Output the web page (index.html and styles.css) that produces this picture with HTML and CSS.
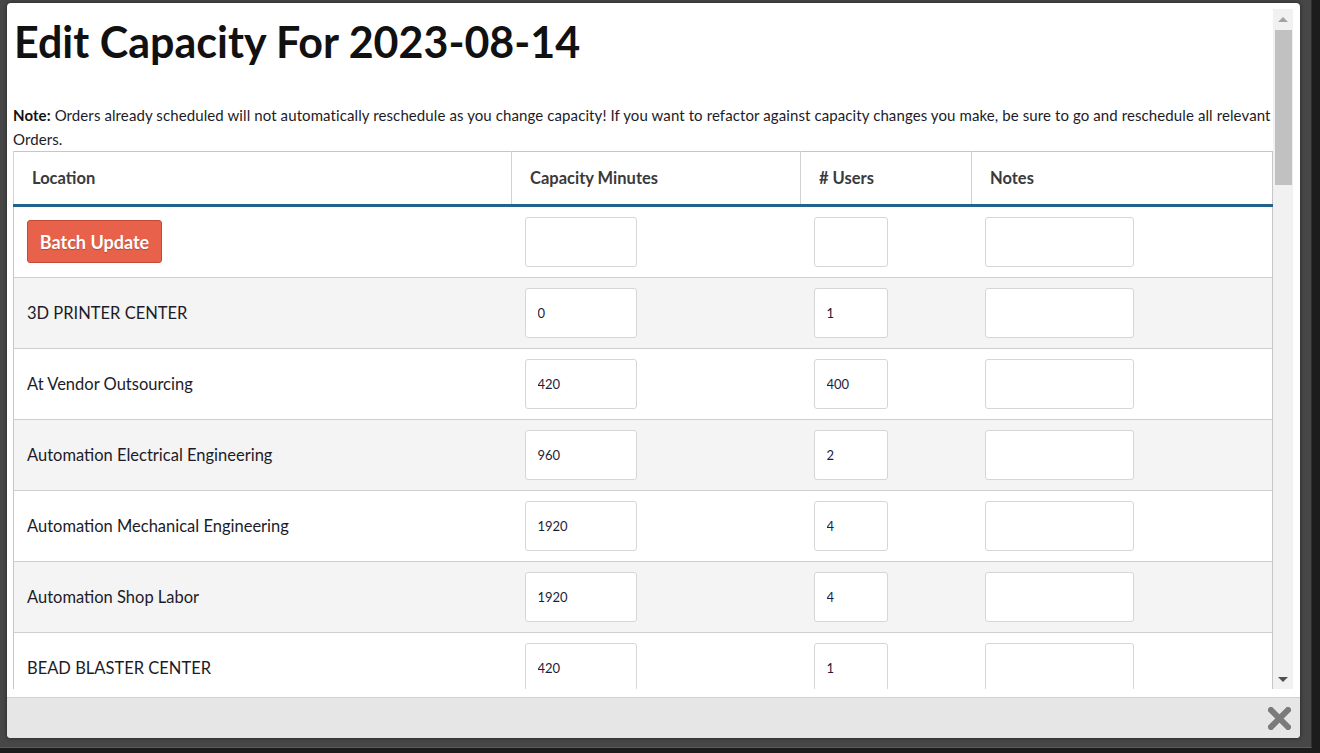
FILE: index.html
```html
<!DOCTYPE html>
<html lang="en">
<head>
  <meta charset="UTF-8">
  <title>Edit Capacity</title>
  <link rel="stylesheet" href="styles.css">
</head>
<body>

  <div class="backdrop">
    <div class="modal">
      <div class="modal-body">
        <div class="scroll-content">
          <h1>Edit Capacity For 2023-08-14</h1>
          <p class="note"><b>Note:</b> Orders already scheduled will not automatically reschedule as you change capacity! If you want to refactor against capacity changes you make, be sure to go and reschedule all relevant Orders.</p>

          <table class="capacity">
            <colgroup>
              <col style="width: 498px">
              <col style="width: 289px">
              <col style="width: 171px">
              <col>
            </colgroup>
            <thead>
              <tr>
                <th>Location</th>
                <th>Capacity Minutes</th>
                <th># Users</th>
                <th>Notes</th>
              </tr>
            </thead>
            <tbody id="capacity-body">
              <tr>
                <td><button class="batch-btn">Batch Update</button></td>
                <td><input class="in-minutes" type="text"></td>
                <td><input class="in-users" type="text"></td>
                <td><input class="in-notes" type="text"></td>
              </tr>
              <!-- location rows get added here -->
            </tbody>
          </table>
        </div>

        <div class="scrollbar">
          <div class="sb-arrow"><span class="tri-up"></span></div>
          <div class="sb-thumb"></div>
          <div class="sb-track"></div>
          <div class="sb-arrow"><span class="tri-down"></span></div>
        </div>
      </div>

      <div class="modal-footer">
        <svg class="close-x" width="23" height="23" viewBox="0 0 23 23">
          <path d="M3 3 L20 20 M20 3 L3 20" stroke="#7b7b7b" stroke-width="6" stroke-linecap="square" fill="none"/>
        </svg>
      </div>
    </div>
  </div>

  <script>
    // capacity per location for the day
    const locations = [
      { name: "3D PRINTER CENTER", minutes: 0, users: 1 },
      { name: "At Vendor Outsourcing", minutes: 420, users: 400 },
      { name: "Automation Electrical Engineering", minutes: 960, users: 2 },
      { name: "Automation Mechanical Engineering", minutes: 1920, users: 4 },
      { name: "Automation Shop Labor", minutes: 1920, users: 4 },
      { name: "BEAD BLASTER CENTER", minutes: 420, users: 1 }
    ];

    const body = document.getElementById("capacity-body");
    locations.forEach(loc => {
      const row = document.createElement("tr");
      row.innerHTML = `
        <td>${loc.name}</td>
        <td><input class="in-minutes" type="text" value="${loc.minutes}"></td>
        <td><input class="in-users" type="text" value="${loc.users}"></td>
        <td><input class="in-notes" type="text"></td>
      `;
      body.appendChild(row);
    });
  </script>

</body>
</html>
```

FILE: styles.css
```css
body {
  margin: 0;
  padding: 0;
  background: #1c1c1c;
  font-family: Lato, "Open Sans", sans-serif;
  color: #1c1c28;
}

.backdrop {
  width: 1312px;
  height: 748px;
  box-sizing: border-box;
  padding: 3px 0 0 7px;
  background: #474747;
  border-right: 1px solid #2e2e2e;
  border-bottom: 1px solid #5c5c5c;
}

.modal {
  width: 1293px;
  height: 735px;
  box-sizing: border-box;
  padding-top: 6px;
  background: #fff;
  border-radius: 4px;
  box-shadow: 0 0 4px rgba(0, 0, 0, 0.5);
  display: flex;
  flex-direction: column;
  overflow: hidden;
}

.modal-body {
  height: 680px;
  margin: 0 7px 8px 6px;
  display: flex;
}

.scroll-content {
  width: 1260px;
  overflow: hidden;
}

h1 {
  margin: 7px 0 35px 1px;
  font-size: 43px;
  line-height: 1.2;
  font-weight: bold;
  color: #111;
}

.note {
  margin: 0;
  font-size: 15px;
  line-height: 24px;
  letter-spacing: 0.1px;
  color: #1c1c28;
}

.note b {
  color: #111;
}

/* capacity table */
.capacity {
  width: 1260px;
  table-layout: fixed;
  border-collapse: collapse;
  border: 1px solid #c6c6c6;
}

.capacity th {
  height: 54px;
  box-sizing: border-box;
  padding: 0 18px;
  text-align: left;
  font-size: 16.5px;
  font-weight: bold;
  color: #3a3a3a;
  border-left: 1px solid #d2d2d2;
  border-bottom: 3px solid #22628c;
}

.capacity td {
  height: 70px;
  box-sizing: border-box;
  padding: 10px 13px;
  font-size: 16.5px;
  color: #1c1c28;
  border-top: 1px solid #cfcfcf;
}

.capacity tbody tr:nth-child(even) td {
  background: #f4f4f4;
}

.capacity input {
  height: 50px;
  box-sizing: border-box;
  padding: 0 12px;
  border: 1px solid #d6d6d6;
  border-radius: 3px;
  background: #fff;
  font-family: Lato, sans-serif;
  font-size: 13px;
  color: #1c1c3a;
  display: block;
}

.in-minutes { width: 112px; }
.in-users { width: 74px; }
.in-notes { width: 149px; }

.batch-btn {
  width: 135px;
  height: 43px;
  padding: 0;
  background: #e8624b;
  border: 1px solid #c44a38;
  border-radius: 3px;
  color: #fff;
  font-family: Lato, sans-serif;
  font-size: 18px;
  font-weight: bold;
  text-shadow: 0 1px 1px rgba(0, 0, 0, 0.25);
}

/* fake scrollbar */
.scrollbar {
  width: 20px;
  display: flex;
  flex-direction: column;
  background: #f1f1f1;
}

.sb-arrow {
  height: 20px;
  display: flex;
  align-items: center;
  justify-content: center;
}

.tri-up {
  border-left: 5px solid transparent;
  border-right: 5px solid transparent;
  border-bottom: 5px solid #a3a3a3;
}

.tri-down {
  border-left: 5px solid transparent;
  border-right: 5px solid transparent;
  border-top: 5px solid #505050;
}

.sb-thumb {
  height: 155px;
  margin: 1px 1px 0 2px;
  background: #c1c1c1;
}

.sb-track {
  flex: 1;
}

.modal-footer {
  height: 41px;
  box-sizing: border-box;
  border-top: 1px solid #d2d2d2;
  background: #e6e6e6;
  display: flex;
  align-items: center;
  justify-content: flex-end;
  padding-right: 9px;
}
```
